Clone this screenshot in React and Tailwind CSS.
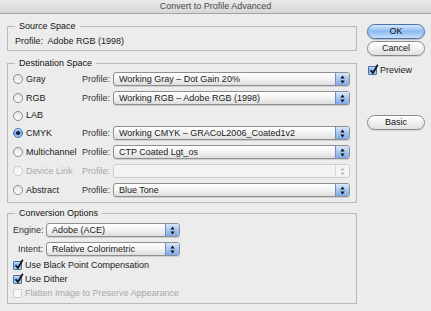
import React from 'react';

const font = { fontFamily: '"Liberation Sans", Arial, sans-serif' };

function Arrows({ color }) {
  return (
    <svg width="5" height="9" viewBox="0 0 5 9">
      <path d="M2.5 0.5 L4.6 3.6 H0.4Z M2.5 8.5 L4.6 5.4 H0.4Z" fill={color} />
    </svg>
  );
}

// Aqua style popup menu
function Popup({ value, disabled, width }) {
  return (
    <div
      className={`flex h-[14px] items-stretch overflow-hidden rounded-[3px] border ${
        disabled
          ? 'border-[#cdcdcd] bg-[#f4f4f4]'
          : 'border-[#8f8f8f] bg-linear-to-b from-white via-[#f3f3f3] to-[#dedede] shadow-[0_1px_0_rgba(0,0,0,0.12)]'
      } ${width}`}
    >
      <div className="flex flex-1 items-center truncate pl-[5px] leading-[12px] text-[#1a1a1a]">{value}</div>
      <div
        className={`flex w-[14px] items-center justify-center border-l ${
          disabled
            ? 'border-[#d8d8d8] bg-[#f4f4f4]'
            : 'border-[#6f8fc4] bg-linear-to-b from-[#d9e8fb] via-[#a7c7f2] to-[#7eaaea]'
        }`}
      >
        <Arrows color={disabled ? '#bdbdbd' : '#111'} />
      </div>
    </div>
  );
}

function Radio({ checked, disabled }) {
  if (checked) {
    return (
      <span className="flex h-[10px] w-[10px] items-center justify-center rounded-full border border-[#4a6ea8] bg-linear-to-b from-[#c3dcfa] via-[#6ea3ea] to-[#a9cbf5]">
        <span className="h-[4px] w-[4px] rounded-full bg-[#1b1b2a]" />
      </span>
    );
  }
  return (
    <span
      className={`h-[10px] w-[10px] rounded-full border ${
        disabled ? 'border-[#c9c9c9] bg-[#f7f7f7]' : 'border-[#8a8a8a] bg-linear-to-b from-[#e4e4e4] to-white'
      }`}
    />
  );
}

function Check({ checked, disabled }) {
  return (
    <span
      className={`relative flex h-[9px] w-[9px] items-center justify-center rounded-[1px] border ${
        checked
          ? 'border-[#4a6ea8] bg-linear-to-b from-[#c3dcfa] via-[#7eaeed] to-[#b3d1f6]'
          : disabled
          ? 'border-[#cfcfcf] bg-[#f7f7f7]'
          : 'border-[#8a8a8a] bg-white'
      }`}
    >
      {checked && (
        <svg width="10" height="11" viewBox="0 0 10 11" className="absolute -top-[3px] left-[0px]">
          <path d="M1.6 6.2 L3.9 9 L8.8 0.8" fill="none" stroke="#111" strokeWidth="1.7" />
        </svg>
      )}
    </span>
  );
}

function Button({ children, primary }) {
  return (
    <div
      className={`flex h-[15px] w-[58px] items-center justify-center rounded-full border leading-none text-[#111] ${
        primary
          ? 'border-[#4c6fae] bg-linear-to-b from-[#d5e7fc] via-[#8dbaf1] to-[#c8e0fa] shadow-[0_1px_1px_rgba(0,0,0,0.2)]'
          : 'border-[#8a8a8a] bg-linear-to-b from-white via-[#f1f1f1] to-[#e0e0e0] shadow-[0_1px_0_rgba(0,0,0,0.1)]'
      }`}
    >
      {children}
    </div>
  );
}

const rows = [
  { name: 'Gray', value: 'Working Gray – Dot Gain 20%' },
  { name: 'RGB', value: 'Working RGB – Adobe RGB (1998)' },
  { name: 'LAB' },
  { name: 'CMYK', value: 'Working CMYK – GRACoL2006_Coated1v2', checked: true },
  { name: 'Multichannel', value: 'CTP Coated Lgt_os' },
  { name: 'Device Link', value: '', disabled: true },
  { name: 'Abstract', value: 'Blue Tone' },
];

export default function App() {
  return (
    <div className="h-[311px] w-[431px] overflow-hidden bg-[#ececec] text-[9px] text-[#1a1a1a]" style={font}>
      <div className="flex h-[14px] items-center justify-center border-b border-[#a3a3a3] bg-linear-to-b from-[#ebebeb] to-[#d6d6d6] leading-none text-[#4a4a4a]">
        Convert to Profile Advanced
      </div>

      <div className="flex gap-[10px] px-[7px] pt-[7px]">
        <div className="flex w-[350px] flex-col">
          <fieldset className="border border-[#b9b9b9] pb-[3px] pl-[5px] pr-[6px] pt-[4px]">
            <legend className="ml-[2px] px-[4px] leading-[11px] text-[#111]">Source Space</legend>
            <div className="pl-[2px] leading-[11px]">Profile:&nbsp; Adobe RGB (1998)</div>
          </fieldset>

          <fieldset className="mt-[7px] border border-[#b9b9b9] pb-[5px] pl-[5px] pr-[6px] pt-[3px]">
            <legend className="ml-[2px] px-[4px] leading-[11px] text-[#111]">Destination Space</legend>
            <div className="flex flex-col gap-[5px]">
              {rows.map((r) => (
                <div
                  key={r.name}
                  className={`grid grid-cols-[69px_31px_237px] items-center ${r.value === undefined ? 'h-[11px]' : 'h-[14px]'}`}
                >
                  <div className={`flex items-center gap-[3px] ${r.disabled ? 'text-[#a8a8a8]' : ''}`}>
                    <Radio checked={r.checked} disabled={r.disabled} />
                    <span className="leading-none">{r.name}</span>
                  </div>
                  {r.value !== undefined && (
                    <>
                      <span className={`leading-none ${r.disabled ? 'text-[#a8a8a8]' : 'text-[#333]'}`}>Profile:</span>
                      <Popup value={r.value} disabled={r.disabled} width="w-[237px]" />
                    </>
                  )}
                </div>
              ))}
            </div>
          </fieldset>

          <fieldset className="mt-[5px] border border-[#b9b9b9] pb-[3px] pl-[5px] pr-[6px] pt-[4px]">
            <legend className="ml-[2px] px-[4px] leading-[11px] text-[#111]">Conversion Options</legend>
            <div className="grid grid-cols-[30px_134px] items-center gap-x-[3px] gap-y-[5px]">
              <span className="text-right leading-none text-[#333]">Engine:</span>
              <Popup value="Adobe (ACE)" width="w-[134px]" />
              <span className="text-right leading-none text-[#333]">Intent:</span>
              <Popup value="Relative Colorimetric" width="w-[134px]" />
            </div>
            <div className="mt-[2px] flex flex-col">
              <div className="flex h-[14px] items-center gap-[3px]">
                <Check checked />
                <span className="leading-none">Use Black Point Compensation</span>
              </div>
              <div className="flex h-[14px] items-center gap-[3px]">
                <Check checked />
                <span className="leading-none">Use Dither</span>
              </div>
              <div className="flex h-[14px] items-center gap-[3px] text-[#a8a8a8]">
                <Check disabled />
                <span className="leading-none">Flatten Image to Preserve Appearance</span>
              </div>
            </div>
          </fieldset>
        </div>

        <div className="mt-[3px] flex flex-col">
          <Button primary>OK</Button>
          <div className="mt-[2px]">
            <Button>Cancel</Button>
          </div>
          <div className="mt-[10px] flex items-center gap-[3px] pl-[1px]">
            <Check checked />
            <span className="leading-none">Preview</span>
          </div>
          <div className="mt-[40px]">
            <Button>Basic</Button>
          </div>
        </div>
      </div>
    </div>
  );
}
